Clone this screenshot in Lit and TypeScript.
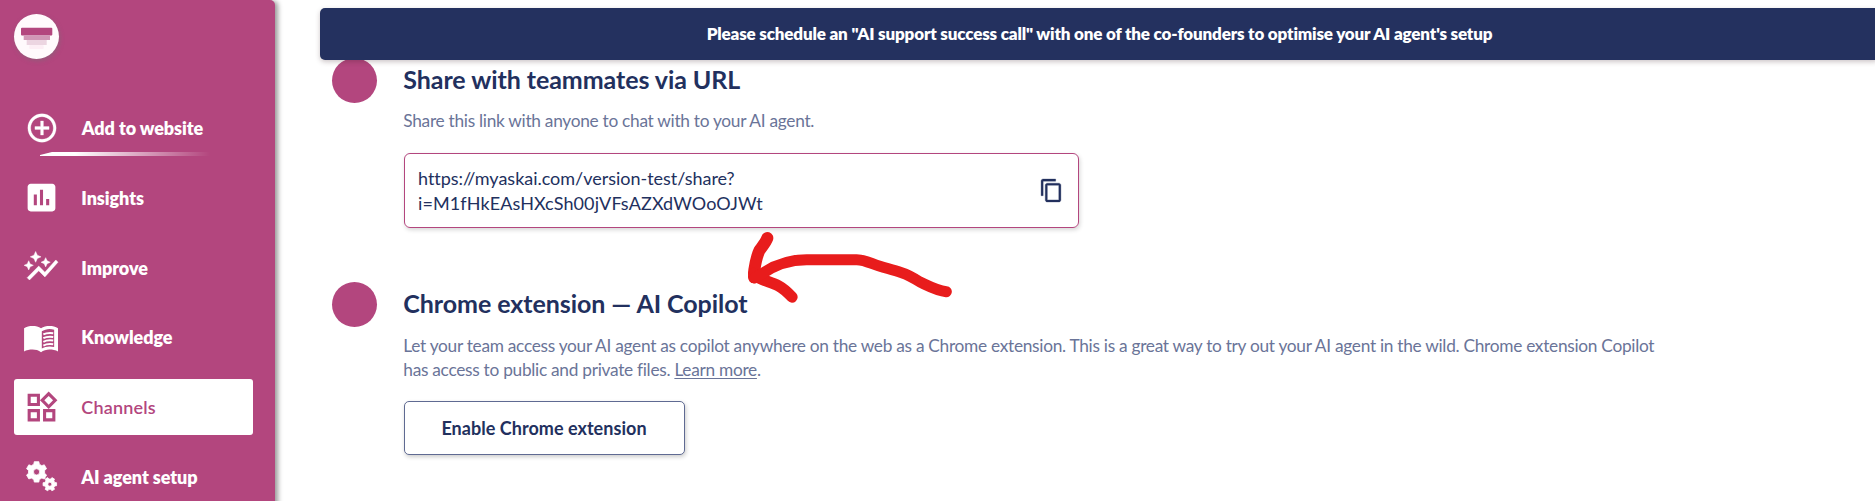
import { LitElement, html, css, svg } from "lit";
import { customElement } from "lit/decorators.js";
import { classMap } from "lit/directives/class-map.js";

/** Outline of a gear with flat teeth, centred on (cx, cy). */
function gear(cx: number, cy: number, outer: number, inner: number, hole: number, teeth: number, turn: number): string {
  const points: string[] = [];
  const step = (Math.PI * 2) / teeth;
  for (let i = 0; i < teeth; i++) {
    const a = i * step + turn;
    for (const [r, k] of [[inner, -0.33], [outer, -0.21], [outer, 0.21], [inner, 0.33]]) {
      points.push(`${(cx + r * Math.cos(a + k * step)).toFixed(2)} ${(cy + r * Math.sin(a + k * step)).toFixed(2)}`);
    }
  }
  return `M${points.join("L")}ZM${cx - hole} ${cy}a${hole} ${hole} 0 1 0 ${hole * 2} 0a${hole} ${hole} 0 1 0 ${-hole * 2} 0Z`;
}

const icons = {
  add: svg`<path d="M13 7h-2v4H7v2h4v4h2v-4h4v-2h-4V7zm-1-5C6.480 2 2 6.480 2 12s4.480 10 10 10 10-4.480 10-10S17.520 2 12 2zm0 18c-4.410 0-8-3.590-8-8s3.590-8 8-8 8 3.590 8 8-3.590 8-8 8z" stroke="currentColor" stroke-width=".2"/>`,
  insights: svg`<path d="M19 3H5c-1.100 0-2 .9-2 2v14c0 1.100.9 2 2 2h14c1.100 0 2-.9 2-2V5c0-1.100-.9-2-2-2zM9 17H7v-7h2v7zm4 0h-2V7h2v10zm4 0h-2v-4h2v4z"/>`,
  improve: svg`<path transform="translate(-.3 -.4)" d="M14.060 9.940 12 9l2.060-.94L15 6l.94 2.060L18 9l-2.060.94L15 12zM4 14l.94-2.060L7 11l-2.060-.94L4 8l-.94 2.060L1 11l2.060.94zM8.500 9l1.090-2.410L12 5.500 9.590 4.410 8.500 2 7.410 4.410 5 5.500l2.410 1.090zM4.500 20.500l6-6.010 4 4L23 8.930l-1.410-1.410-7.090 7.970-4-4L3 19z" stroke="currentColor" stroke-width=".3"/>`,
  knowledge: svg`<path transform="translate(-.3 0)" d="M17.500 4.500c-1.950 0-4.050.4-5.500 1.500-1.450-1.100-3.550-1.500-5.500-1.500S2.450 4.900 1 6v15c1.400-.8 3.700-1.200 5.500-1.200s4.050.5 5.500 1.700c1.350-1 3.700-1.700 5.500-1.700 1.800 0 4.100.4 5.500 1.200V6c-1.490-1.120-3.630-1.500-5.500-1.500zm3 13.700c-1-.3-2-.4-3-.4-1.700 0-3.750.5-5 1.300V8c1.250-.85 3.300-1.500 5-1.500 1 0 2 .1 3 .4z"/>
    <path transform="translate(-.3 0)" fill="none" stroke="currentColor" stroke-width="1.300" d="M13.500 10c1.500-.8 4-1.100 6.400-.8M13.500 12.400c1.500-.8 4-1.100 6.400-.8M13.500 14.800c1.500-.8 4-1.100 6.400-.8M13.500 17.200c1.500-.8 4-1.100 6.400-.8"/>`,
  channels: svg`<path d="M16.660 4.520l2.830 2.830-2.830 2.830-2.830-2.830 2.830-2.830M9 5v4H5V5h4m10 10v4h-4v-4h4M9 15v4H5v-4h4m7.660-13.310L11 7.340 16.660 13l5.660-5.660-5.660-5.650zM11 3H3v8h8V3zm10 10h-8v8h8v-8zm-10 0H3v8h8v-8z"/>`,
  setup: svg`<path fill-rule="evenodd" d="${gear(8.8, 9, 6.8, 5.3, 2, 6, Math.PI / 6)}${gear(17.4, 17, 4.5, 3.4, 1.3, 6, 0)}" stroke="currentColor" stroke-width=".5" stroke-linejoin="round"/>`,
};

type IconName = keyof typeof icons;

const items: { icon: IconName; label: string; active?: boolean; marked?: boolean }[] = [
  { icon: "add", label: "Add to website", marked: true },
  { icon: "insights", label: "Insights" },
  { icon: "improve", label: "Improve" },
  { icon: "knowledge", label: "Knowledge" },
  { icon: "channels", label: "Channels", active: true },
  { icon: "setup", label: "AI agent setup" },
];

@customElement("side-nav")
export class SideNav extends LitElement {
  static styles = css`
    :host {
      display: block;
      box-sizing: border-box;
      flex: none;
      width: 275px;
      height: 520px;
      padding: 14px;
      background: #b3467e;
      color: #fff;
      border-radius: 0 5px 5px 0;
      box-shadow: 3px 1px 5px rgba(0, 0, 0, 0.4);
    }
    .logo {
      display: block;
      width: 45px;
      height: 45px;
      border-radius: 50%;
      background: #fffafc;
      box-shadow: 1px 2px 4px rgba(120, 110, 120, 0.5);
    }
    nav {
      display: flex;
      flex-direction: column;
      gap: 13.8px;
      margin-top: 41px;
    }
    .item {
      display: flex;
      align-items: center;
      box-sizing: border-box;
      width: 239px;
      height: 56px;
      padding-left: 8.5px;
      border-radius: 3px;
      font-weight: 800;
      font-size: 18px;
      line-height: 22px;
      letter-spacing: -0.08px;
    }
    .active {
      background: #fff;
      color: #b3467e;
      font-weight: 600;
      letter-spacing: 0.18px;
    }
    .marked {
      background: linear-gradient(90deg, #fff 35px, rgba(255, 255, 255, 0) 170px) 26px 100% / 175px 4px no-repeat;
      clip-path: polygon(0 0, 100% 0, 100% 100%, 26px 100%, 26px 55px, 38px 52px, 0 52px);
    }
    .icon {
      flex: none;
      width: 37px;
      height: 37px;
      margin-right: 21.800px;
      fill: currentColor;
    }
    .marked .icon {
      width: 34px;
      height: 34px;
      margin: 0 22.800px 0 2.500px;
    }
  `;

  render() {
    return html`
      <svg class="logo" viewBox="0 0 45 45">
        <rect x="7" y="13.700" width="31.300" height="7.700" rx="1" fill="#b3467e" />
        <rect x="9.700" y="21.400" width="26.300" height="4.600" fill="#d197b6" />
        <rect x="12.700" y="26" width="20" height="5" fill="#ecd5e1" />
        <rect x="15.300" y="31" width="14.400" height="4" rx="1" fill="#fdeef5" />
      </svg>
      <nav>
        ${items.map(
          (item) => html`
            <div class=${classMap({ item: true, active: !!item.active, marked: !!item.marked })}>
              <svg class="icon" viewBox="0 0 24 24">${icons[item.icon]}</svg>
              <span>${item.label}</span>
            </div>
          `
        )}
      </nav>
    `;
  }
}

@customElement("channel-section")
export class ChannelSection extends LitElement {
  static properties = { heading: { type: String } };
  declare heading: string;

  static styles = css`
    :host {
      display: flex;
      gap: 27px;
      padding-left: 12px;
    }
    .dot {
      flex: none;
      width: 45px;
      height: 45px;
      border-radius: 50%;
      background: #b3467e;
    }
    h2 {
      margin: 6px 0 0 -0.7px;
      font-size: 25px;
      font-weight: 700;
      line-height: 30px;
      letter-spacing: -0.06px;
      color: #22305e;
    }
  `;

  render() {
    return html`
      <div class="dot"></div>
      <div>
        <h2>${this.heading}</h2>
        <slot></slot>
      </div>
    `;
  }
}

@customElement("app-root")
export class AppRoot extends LitElement {
  static styles = css`
    :host {
      display: flex;
      position: relative;
      height: 501px;
      overflow: hidden;
      background: #fff;
      font-family: Lato, "Liberation Sans", sans-serif;
      color: #22305e;
    }
    main {
      flex: 1;
      min-width: 0;
      padding: 8px 0 0 45px;
    }
    .banner {
      position: relative;
      z-index: 1;
      height: 52px;
      margin-right: -4px;
      border-radius: 5px;
      background: #24315f;
      box-shadow: 0 2px 5px rgba(60, 30, 40, 0.25);
      color: #fff;
      font-size: 17px;
      font-weight: 800;
      line-height: 51px;
      letter-spacing: -0.17px;
      text-align: center;
    }
    .share {
      margin-top: -2px;
    }
    .copilot {
      margin-top: 54px;
    }
    p {
      width: 1265px;
      margin: 15px 0 0 -0.7px;
      font-size: 17.300px;
      line-height: 24px;
      letter-spacing: -0.285px;
      color: #6a7498;
    }
    .copilot p {
      margin-top: 16px;
    }
    a {
      color: inherit;
      text-decoration: underline;
      text-underline-offset: 2px;
      text-decoration-thickness: 1px;
    }
    .link {
      display: flex;
      align-items: center;
      justify-content: space-between;
      box-sizing: border-box;
      width: 675px;
      height: 75px;
      margin-top: 20px;
      padding: 0 14px 0 13px;
      border: 1px solid #b3467e;
      border-radius: 6px;
      box-shadow: 1px 2px 4px rgba(0, 0, 0, 0.16);
      font-size: 18px;
      line-height: 25px;
    }
    .url {
      width: 400px;
      font-variant-ligatures: none;
      letter-spacing: -0.02px;
    }
    .query {
      letter-spacing: 0.11px;
    }
    .copy {
      width: 25px;
      height: 25px;
      fill: #22305e;
      stroke: #22305e;
      stroke-width: 0.3;
    }
    button {
      display: block;
      box-sizing: border-box;
      width: 281px;
      height: 54px;
      margin-top: 19px;
      padding: 0 1px 0 0;
      border: 1px solid #5f6a92;
      border-radius: 5px;
      background: #fff;
      box-shadow: 1px 2px 4px rgba(0, 0, 0, 0.2);
      color: #22305e;
      font: 700 18px/22px Lato, "Liberation Sans", sans-serif;
      letter-spacing: 0.04px;
    }
    .arrow {
      position: absolute;
      z-index: 2;
      left: 720px;
      top: 220px;
      width: 260px;
      height: 90px;
      fill: none;
      stroke: #e81c1c;
      stroke-width: 33;
      stroke-linecap: round;
      stroke-linejoin: round;
    }
  `;

  render() {
    return html`
      <side-nav></side-nav>
      <main>
        <div class="banner">
          Please schedule an "AI support success call" with one of the co-founders to optimise your AI agent's setup
        </div>
        <channel-section class="share" heading="Share with teammates via URL">
          <p>Share this link with anyone to chat with to your AI agent.</p>
          <div class="link">
            <span class="url">https://myaskai.com/version-test/share?<br /><span class="query">i=M1fHkEAsHXcSh00jVFsAZXdWOoOJWt</span></span>
            <svg class="copy" viewBox="0 0 24 24">
              <path d="M16 1H4c-1.100 0-2 .9-2 2v14h2V3h12V1zm3 4H8c-1.100 0-2 .9-2 2v14c0 1.100.9 2 2 2h11c1.100 0 2-.9 2-2V7c0-1.100-.9-2-2-2zm0 16H8V7h11v14z" />
            </svg>
          </div>
        </channel-section>
        <channel-section class="copilot" heading="Chrome extension — AI Copilot">
          <p>
            Let your team access your AI agent as copilot anywhere on the web as a Chrome extension. This is a great way
            to try out your AI agent in the wild. Chrome extension Copilot has access to public and private files.
            <a>Learn more</a>.
          </p>
          <button>Enable Chrome extension</button>
        </channel-section>
      </main>
      <svg class="arrow" viewBox="0 0 780 270">
        <path d="M142 54C138 66 128 78 119 90C109 110 106 130 103 150L102 172" stroke-width="36" />
        <path d="M101 160C115 180 150 184 175 197C192 206 204 218 216 231" stroke-width="34" />
        <path d="M679 215C650 212 620 195 600 186C580 173 565 164 545 158C520 150 500 145 480 139C455 132 435 119 410 119H260C205 119 160 137 125 162L104 174" />
      </svg>
    `;
  }
}
